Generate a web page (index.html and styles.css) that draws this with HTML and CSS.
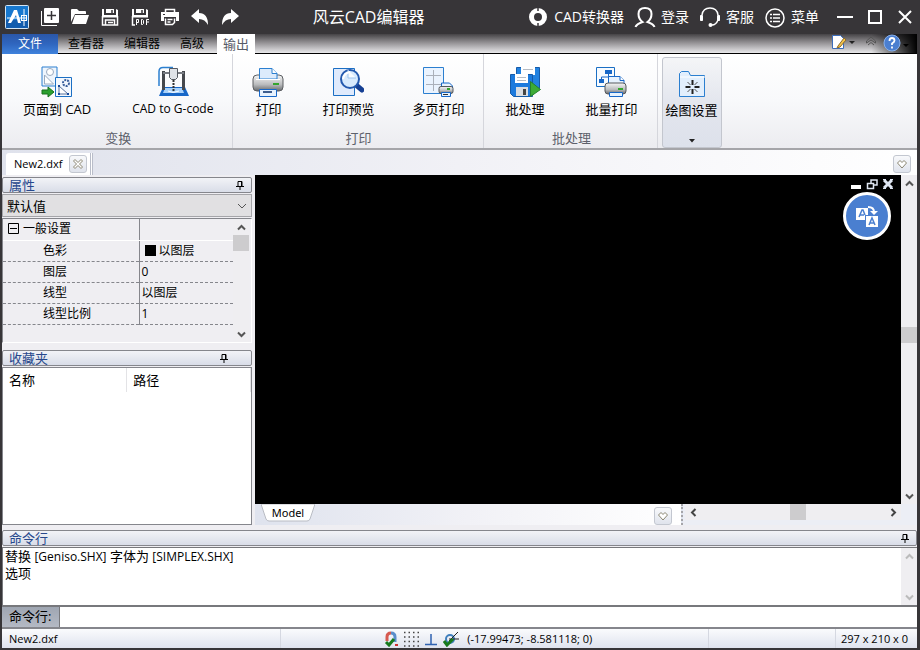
FILE: index.html
```
<!DOCTYPE html>
<html lang="zh-CN">
<head>
    <meta charset="UTF-8">
    <meta name="viewport" content="width=device-width, initial-scale=1.0">
    <title>风云CAD编辑器</title>
    <link rel="stylesheet" href="styles.css">
</head>
<body>
    <header class="titlebar">
        <svg class="logo" viewBox="0 0 24 24">
            <rect x="0.5" y="0.5" width="23" height="23" rx="1" fill="#1778cf" stroke="#d5e6f5"/>
            <path d="M1 15h22v8H1z" fill="#125cae"/>
            <path d="M3 18L9 5h3l4 13h-3l-2-8-5 8z" fill="#fff"/>
            <path d="M2 13h20M19 4v17" stroke="#fff" fill="none"/>
            <rect x="16.500" y="10.500" width="5" height="5" fill="none" stroke="#fff"/>
        </svg>
        <div class="quick-tools">
            <button class="quick" aria-label="新建"><svg viewBox="0 0 20 20"><rect x="4" y="1" width="15" height="15" rx="1" fill="#fff"/><path d="M1.500 4v14.500H17" stroke="#fff" fill="none"/><path d="M11.500 4v9M7 8.500h9" stroke="#373538" stroke-width="1.500"/></svg></button>
            <button class="quick" aria-label="打开"><svg viewBox="0 0 20 20"><path d="M1 15V3q0-1 1-1h5l2 2h6q1 0 1 1v2H5z" fill="#fff"/><path d="M5 8h14l-3 9H2z" fill="#fff"/></svg></button>
            <button class="quick" aria-label="保存"><svg viewBox="0 0 20 20"><path d="M2 2h2v6h12V2l2 1v6H2zM6 2h8v4H6z" fill="#fff"/><path d="M2 9.500h16" stroke="#fff" stroke-width="2"/><path d="M2.500 9v9h15V9M5.500 18v-5h9v5M8 15.500h5" fill="none" stroke="#fff" stroke-width="1.500"/><path d="M12 3v3" stroke="#373538" stroke-width="1.500"/></svg></button>
            <button class="quick" aria-label="保存为 PDF"><svg viewBox="0 0 20 20"><path d="M2 2h2v6h12V2l2 1v6H2zM6 2h8v4H6z" fill="#fff"/><path d="M2 9.500h16" stroke="#fff" stroke-width="2"/><path d="M2.500 9v9H5" fill="none" stroke="#fff" stroke-width="1.500"/><path d="M12 3v3" stroke="#373538" stroke-width="1.500"/><path d="M6.500 18v-5.500h2v3h-2M11.500 12.500h1l1 1v3l-1 1h-1zM16.500 18v-5.500H19M16.500 15H19" fill="none" stroke="#fff"/></svg></button>
            <button class="quick" aria-label="打印"><svg viewBox="0 0 20 20"><path d="M5.500 5.500v-3h9v3" fill="none" stroke="#fff" stroke-width="1.500"/><path d="M1 5h18v9h-3v-4H4v4H1z" fill="#fff"/><path d="M3 7.500h2" stroke="#373538"/><path d="M5.500 11.500v6h7l2-2v-4M7.500 12.500h5M7.500 15h3" fill="none" stroke="#fff" stroke-width="1.500"/></svg></button>
            <button class="quick" aria-label="撤销"><svg viewBox="0 0 20 20"><path d="M1 9l8-7v4q9 0 9 12-3-6-9-6v4z" fill="#fff"/></svg></button>
            <button class="quick" aria-label="重做"><svg viewBox="0 0 20 20"><path d="M19 9l-8-7v4Q2 6 2 18q3-6 9-6v4z" fill="#fff"/></svg></button>
        </div>
        <h1 class="title">风云CAD编辑器</h1>
        <nav class="account">
            <a href="#"><svg viewBox="0 0 22 22"><circle cx="11" cy="11" r="6.500" fill="none" stroke="#fff" stroke-width="5"/><path d="M11 1v4M11 17v4" stroke="#373538" stroke-width="1.500"/></svg>CAD转换器</a>
            <a href="#"><svg viewBox="0 0 22 22"><path d="M1.500 21q1-3 7-5-4-3-4-8 0-6 6.500-6t6.500 6q0 5-4 8 6 2 7 5" fill="none" stroke="#fff" stroke-width="2"/></svg>登录</a>
            <a href="#"><svg viewBox="0 0 22 22"><path d="M3 9q1-7 8-7t8 7M19 14q-2 5-6 5" fill="none" stroke="#fff" stroke-width="1.500"/><path d="M1.500 9.500h2v5h-2zM18.500 9.500h2v5h-2z" stroke="#fff" fill="#fff"/><circle cx="11.500" cy="19" r="2" fill="#fff"/></svg>客服</a>
            <a href="#"><svg viewBox="0 0 22 22"><circle cx="11" cy="12" r="9" fill="none" stroke="#fff" stroke-width="1.500"/><path d="M6 8.500h2M9 8.500h7M6 12h2M9 12h7M6 15.500h2M9 15.500h7" stroke="#fff" stroke-width="1.500"/></svg>菜单</a>
        </nav>
        <div class="window-buttons">
            <button aria-label="最小化"><svg viewBox="0 0 16 16"><path d="M0 8h16" stroke="#fff" stroke-width="2"/></svg></button>
            <button aria-label="最大化"><svg viewBox="0 0 16 16"><rect x="2" y="2" width="12" height="12" fill="none" stroke="#fff" stroke-width="2"/></svg></button>
            <button aria-label="关闭"><svg viewBox="0 0 16 16"><path d="M2 2l12 12M14 2L2 14" stroke="#fff" stroke-width="2"/></svg></button>
        </div>
    </header>

    <div class="window">
        <nav class="ribbon-tabs">
            <button class="tab file">文件</button>
            <button class="tab">查看器</button>
            <button class="tab">编辑器</button>
            <button class="tab">高级</button>
            <button class="tab active">输出</button>
            <div class="tab-tools">
                <button aria-label="样式"><svg class="style-icon" viewBox="0 0 24 16"><path d="M1.500 1.500h8l3 3v10h-11z" fill="#fff" stroke="#3c6dbb"/><path d="M7 12l6-8 2 2-6 7-3 1z" fill="#f4c34a" stroke="#8a6a2a"/><path d="M18 7h6l-3 3z" fill="#222"/></svg></button>
                <button aria-label="折叠"><svg class="small-icon" viewBox="0 0 12 12"><path d="M1.500 6L6 2l4.500 4v2L6 5 1.500 8zM3 10l3-2.500L9 10" fill="none" stroke="#555"/></svg></button>
                <button aria-label="帮助"><svg class="help-icon" viewBox="0 0 28 18"><circle cx="9" cy="9" r="8" fill="#4b7fd0" stroke="#88b0ec"/><path d="M6.500 7q0-3 2.500-3t2.500 2.500q0 1.500-2.500 3V11M9 12.500v2" fill="none" stroke="#fff" stroke-width="1.800"/><path d="M20 10h6l-3 3z" fill="#000"/></svg></button>
            </div>
        </nav>

        <section class="ribbon">
            <div class="group">
                <div class="group-buttons">
                    <button class="tool">
                        <svg viewBox="0 0 32 32"><path d="M1 1h15v19H1z" fill="#eef5fd" stroke="#2b7fd0"/><circle cx="9" cy="6" r="3.500" fill="#fff" stroke="#9aaac0"/><path d="M3.500 9v9h9z" fill="#fff" stroke="#9aaac0"/><path d="M14.500 11.500h16v19h-16z" fill="#f3f8fe" stroke="#1b6fc4"/><circle cx="25" cy="17" r="3" fill="none" stroke="#3a5f9c" stroke-width="2" stroke-dasharray="2 1"/><path d="M18 20v8h9z" fill="#fff" stroke="#56709c"/><path d="M17 19h2v2h-2zM17 27h2v2h-2zM26 27h2v2h-2z" fill="#184a9a"/><path d="M1 24h6v-3l6 5-6 5v-3H1z" fill="#2ba02f" stroke="#17701c"/></svg>
                        页面到 CAD
                    </button>
                    <button class="tool">
                        <svg viewBox="0 0 32 32"><path d="M16 1.500H6q-4 0-4 4V20" fill="none" stroke="#2b7fd0" stroke-width="1.500"/><path d="M6 21h22l4 9H2z" fill="#1767c8"/><path d="M8 22h17l2 5H6z" fill="#a9d2fa"/><path d="M6.500 5v19M26.500 5v19" stroke="#45484d" stroke-width="3"/><path d="M6 7h21" stroke="#777b82" stroke-width="2"/><path d="M12.500 2.500h8v9l-2 2h-4l-2-2z" fill="#dfe3e8" stroke="#555a62"/><path d="M16.500 14v11" stroke="#333" stroke-width="2" stroke-dasharray="2 1"/><path d="M11 25q5 3 11 0" stroke="#fff" fill="none"/></svg>
                        <span class="latin">CAD to G-code</span>
                    </button>
                </div>
                <div class="group-name">变换</div>
            </div>
            <div class="group print">
                <div class="group-buttons">
                    <button class="tool">
                        <svg viewBox="0 0 32 32"><defs><linearGradient id="metal" x1="0" y1="0" x2="0" y2="1"><stop offset="0" stop-color="#f6f6f6"/><stop offset="0.600" stop-color="#b9bbbd"/><stop offset="1" stop-color="#66696c"/></linearGradient></defs><rect x="1" y="9" width="30" height="16" rx="4" fill="url(#metal)" stroke="#5c5f63"/><path d="M7.500 13V2.500H20l5 5V13z" fill="#dcebfc" stroke="#2b7fd0"/><path d="M20 2.500v5h5" fill="#fff" stroke="#2b7fd0"/><path d="M4 13.500h24" stroke="#fff"/><path d="M21 17h6v2h-6z" fill="#35a52e"/><path d="M7.500 23.500h17v7h-17z" fill="#e7f2fe" stroke="#1767c8"/><path d="M11 26h9" stroke="#3d5d8e" stroke-width="2"/></svg>
                        打印
                    </button>
                    <button class="tool">
                        <svg viewBox="0 0 32 32"><path d="M1.500 2.500h21v27h-21z" fill="#dfeafc" stroke="#1b6fc4"/><path d="M24 19l6 5" stroke="#153f93" stroke-width="5" stroke-linecap="round"/><circle cx="18" cy="13" r="9" fill="#d8eafd" stroke="#2459ae" stroke-width="2"/><path d="M16 4v8h8" fill="#f7fbff" stroke="#9dc4ef"/><path d="M11 13q1-6 7-7" fill="none" stroke="#fff" stroke-width="2"/></svg>
                        打印预览
                    </button>
                    <button class="tool">
                        <svg viewBox="0 0 32 32"><path d="M1.500 1.500h20v26h-20z" fill="#eaf3fe" stroke="#2b7fd0"/><path d="M11.500 4v21M4 9.500h15M4 18.500h15" stroke="#aab0ba"/><path d="M19.500 22v-5h8l3 3v3z" fill="#e7f2fe" stroke="#1767c8"/><rect x="17" y="20.500" width="14" height="7" rx="2" fill="url(#metal)" stroke="#55585c"/><path d="M25 23h3" stroke="#35a52e" stroke-width="2"/><path d="M19.500 26.500h9v4h-9z" fill="#e7f2fe" stroke="#1767c8"/><path d="M21 28.500h5" stroke="#333"/></svg>
                        多页打印
                    </button>
                </div>
                <div class="group-name">打印</div>
            </div>
            <div class="group">
                <div class="group-buttons">
                    <button class="tool">
                        <svg viewBox="0 0 32 32"><path d="M7.500 1.500h23v21h-23z" fill="#2282e0" stroke="#155ba9"/><path d="M12 1h14v8H12z" fill="#fff"/><path d="M14 3.500h10" stroke="#b6bcc5"/><path d="M1.500 8.500h22v22h-19l-3-3z" fill="#1c7add" stroke="#155ba9"/><path d="M6 8h13v9H6z" fill="#fff"/><path d="M8 11.500h9M8 14.500h9" stroke="#b6bcc5"/><path d="M7 21h12v9H7z" fill="#d9dde2"/><path d="M14 23h3v6h-3z" fill="#444"/><path d="M21.500 15.500l10 8-10 7z" fill="#3dab36" stroke="#26822b"/></svg>
                        批处理
                    </button>
                    <button class="tool">
                        <svg viewBox="0 0 32 32"><path d="M1.500 1.500h18v19h-18z" fill="#f7fbff" stroke="#1b6fc4"/><path d="M10 4h7v4h-7zM4 13h5v4H4z" fill="#1767c8"/><path d="M13.500 8v3h-7v2" fill="none" stroke="#1767c8"/><path d="M13.500 19v-8.500H25l4 4V19z" fill="#e7f2fe" stroke="#1767c8"/><path d="M25 10.500v4h4" fill="#fff" stroke="#1767c8"/><rect x="10" y="17" width="21" height="11" rx="3" fill="url(#metal)" stroke="#55585c"/><path d="M23 23h5" stroke="#35a52e" stroke-width="2"/><path d="M14.500 26.500h13v4h-13z" fill="#e7f2fe" stroke="#1767c8"/></svg>
                        批量打印
                    </button>
                </div>
                <div class="group-name">批处理</div>
            </div>
            <button class="tool settings">
                <svg viewBox="0 0 32 32"><path d="M3.500 29.500V6.500l2-2h7l2 4h14v21z" fill="#e2effd" stroke="#2b7fd0"/><path d="M4 10h25" stroke="#fff"/><path d="M16.500 13v5M16.500 22v5M9.500 20h5M18.500 20h5" stroke="#222" stroke-width="2"/><path d="M11.500 15l3 3M18.500 22l3 3M21.500 15l-3 3M14.500 22l-3 3" stroke="#555"/></svg>
                绘图设置
                <svg class="drop" viewBox="0 0 6 4"><path d="M0 0h6L3 3.500z" fill="#222"/></svg>
            </button>
        </section>

        <div class="doc-tabs">
            <div class="doc-tab">
                <span>New2.dxf</span>
                <button class="mini" aria-label="关闭文件"><svg viewBox="0 0 12 12"><path d="M1.500 3l1.500-1.500 3 3 3-3L10.500 3l-3 3 3 3L9 10.500l-3-3-3 3L1.500 9l3-3z" fill="#fff" stroke="#8b8672"/></svg></button>
            </div>
            <button class="mini" aria-label="文件列表"><svg viewBox="0 0 12 12"><path d="M1.500 5L4 2.500l2 2 2-2L10.500 5 6 10z" fill="#fff" stroke="#8b8672"/></svg></button>
        </div>

        <main class="workspace">
            <aside class="sidebar">
                <section class="panel">
                    <div class="panel-head"><h2>属性</h2><button class="pin" aria-label="固定"><svg viewBox="0 0 10 12"><path d="M3 7V2.500h4V7M1 7.500h8M5 8v3" fill="none" stroke="#000"/><path d="M6.500 2v5" stroke="#000"/></svg></button></div>
                    <div class="select-box">
                        <select aria-label="对象"><option>默认值</option></select>
                        <svg class="chevron" viewBox="0 0 10 6"><path d="M1 1l4 4 4-4" fill="none" stroke="#555"/></svg>
                    </div>
                    <div class="props">
                        <table>
                            <tr class="section"><th><svg viewBox="0 0 11 11"><path d="M0.500 0.500h10v10h-10zM2 5.500h7" fill="none" stroke="#000"/></svg>一般设置</th><td></td></tr>
                            <tr><th>色彩</th><td><span class="swatch"></span>以图层</td></tr>
                            <tr><th>图层</th><td>0</td></tr>
                            <tr><th>线型</th><td>以图层</td></tr>
                            <tr><th>线型比例</th><td>1</td></tr>
                        </table>
                        <div class="scroll">
                            <button aria-label="向上"><svg viewBox="0 0 9 9"><path d="M1 6.500L4.500 3 8 6.500" fill="none" stroke="#555" stroke-width="2"/></svg></button>
                            <div class="thumb"></div>
                            <div class="track after"></div>
                            <button aria-label="向下"><svg viewBox="0 0 9 9"><path d="M1 2.500L4.500 6 8 2.500" fill="none" stroke="#555" stroke-width="2"/></svg></button>
                        </div>
                    </div>
                </section>
                <section class="panel favorites">
                    <div class="panel-head"><h2>收藏夹</h2><button class="pin" aria-label="固定"><svg viewBox="0 0 10 12"><path d="M3 7V2.500h4V7M1 7.500h8M5 8v3" fill="none" stroke="#000"/><path d="M6.500 2v5" stroke="#000"/></svg></button></div>
                    <div class="fav-list">
                        <table>
                            <tr><th>名称</th><th>路径</th></tr>
                        </table>
                    </div>
                </section>
            </aside>

            <section class="drawing">
                <div class="view">
                    <div class="canvas">
                        <div class="mdi-buttons">
                            <button aria-label="最小化图纸"><svg viewBox="0 0 12 12"><path d="M1 7h10v4H1z" fill="#fff"/></svg></button>
                            <button aria-label="还原图纸"><svg viewBox="0 0 12 12"><path d="M5 5V2h6v5H8M1.500 5.500h6v5h-6z" fill="none" stroke="#dfe6f2" stroke-width="1.500"/></svg></button>
                            <button aria-label="关闭图纸"><svg viewBox="0 0 12 12"><path d="M2 2l8 8M10 2l-8 8" stroke="#dfe6f2" stroke-width="3"/><path d="M1 1.500h3M8 1.500h3M1 10.500h3M8 10.500h3" stroke="#dfe6f2"/></svg></button>
                        </div>
                        <button class="translate" aria-label="翻译"><svg viewBox="0 0 24 24"><path d="M1 4h12v7H10v5H1z" fill="#fff"/><path d="M11 12h12v11H11z" fill="#fff"/><path d="M4 13l3-7h1l2 5M5 11h4M14 21l3-7 3 7M15 19h4" fill="none" stroke="#4a7fd0" stroke-width="1.500"/><path d="M13 3q6 0 6 5" fill="none" stroke="#fff" stroke-width="2"/><path d="M15 7h8l-4 4z" fill="#fff"/></svg></button>
                    </div>
                    <div class="scroll">
                        <button aria-label="向上"><svg viewBox="0 0 9 9"><path d="M1 6.500L4.500 3 8 6.500" fill="none" stroke="#555" stroke-width="2"/></svg></button>
                        <div class="track before"></div>
                        <div class="thumb"></div>
                        <div class="track after"></div>
                        <button aria-label="向下"><svg viewBox="0 0 9 9"><path d="M1 2.500L4.500 6 8 2.500" fill="none" stroke="#555" stroke-width="2"/></svg></button>
                    </div>
                </div>
                <div class="sheets">
                    <div class="sheet-bar">
                        <button class="sheet"><svg viewBox="0 0 54 18" preserveAspectRatio="none"><path d="M0 0h54l-5 15q-1 2-3 2H8q-2 0-3-2z" fill="#fff" stroke="#b9bcc4"/></svg><span>Model</span></button>
                        <button class="mini" aria-label="布局列表"><svg viewBox="0 0 12 12"><path d="M1.500 5L4 2.500l2 2 2-2L10.500 5 6 10z" fill="#fff" stroke="#8b8672"/></svg></button>
                    </div>
                    <div class="scroll horizontal">
                        <button aria-label="向左"><svg viewBox="0 0 9 9"><path d="M6.500 1L3 4.500 6.500 8" fill="none" stroke="#444" stroke-width="2"/></svg></button>
                        <div class="track before"></div>
                        <div class="thumb"></div>
                        <div class="track after"></div>
                        <button aria-label="向右"><svg viewBox="0 0 9 9"><path d="M2.500 1L6 4.500 2.500 8" fill="none" stroke="#444" stroke-width="2"/></svg></button>
                    </div>
                </div>
            </section>
        </main>

        <section class="command">
            <div class="panel-head"><h2>命令行</h2><button class="pin" aria-label="固定"><svg viewBox="0 0 10 12"><path d="M3 7V2.500h4V7M1 7.500h8M5 8v3" fill="none" stroke="#000"/><path d="M6.500 2v5" stroke="#000"/></svg></button></div>
            <div class="log">
                <div class="log-text">
                    <div>替换 <span class="latin">[Geniso.SHX]</span> 字体为 <span class="latin">[SIMPLEX.SHX]</span></div>
                    <div>选项</div>
                </div>
                <div class="scroll disabled">
                    <button aria-label="向上"><svg viewBox="0 0 9 9"><path d="M1 6.500L4.500 3 8 6.500" fill="none" stroke="#bbb" stroke-width="2"/></svg></button>
                    <div class="track after"></div>
                    <button aria-label="向下"><svg viewBox="0 0 9 9"><path d="M1 2.500L4.500 6 8 2.500" fill="none" stroke="#bbb" stroke-width="2"/></svg></button>
                </div>
            </div>
            <div class="prompt">
                <label for="commandInput">命令行:</label>
                <input type="text" id="commandInput">
            </div>
        </section>

        <footer class="status">
            <div class="cell file-name">New2.dxf</div>
            <div class="cell modes">
                <button aria-label="捕捉"><svg viewBox="0 0 16 16"><path d="M4 10V6q0-4 4-4" fill="none" stroke="#d65a50" stroke-width="3"/><path d="M8 2q4 0 4 4v5" fill="none" stroke="#5b8ecb" stroke-width="3"/><path d="M3 11l3 3 5-6" fill="none" stroke="#177a1c" stroke-width="3"/><path d="M12 13h3v2h-3z" fill="#c33"/></svg></button>
                <button aria-label="栅格"><svg viewBox="0 0 16 16"><path d="M1 1.500h15M1 6h15M1 10.500h15M1 15h15" stroke="#444" stroke-width="1.500" stroke-dasharray="1.500 3"/></svg></button>
                <button aria-label="正交"><svg viewBox="0 0 16 16"><path d="M8 3v10M2 13.500h12" fill="none" stroke="#2f62b0" stroke-width="1.500"/></svg></button>
                <button aria-label="追踪"><svg viewBox="0 0 16 16"><circle cx="7" cy="8" r="4" fill="none" stroke="#3f7fbd" stroke-width="2"/><path d="M6 10l9-9M6 8h10" stroke="#222"/><path d="M1 10l3 4 6-6" fill="none" stroke="#177a1c" stroke-width="3"/></svg></button>
                <span>(-17.99473; -8.581118; 0)</span>
            </div>
            <div class="cell blank"></div>
            <div class="cell size">297 x 210 x 0</div>
        </footer>
    </div>
</body>
</html>
```
FILE: styles.css
```
* {
    box-sizing: border-box;
}
body {
    margin: 0;
    height: 100vh;
    display: flex;
    flex-direction: column;
    background: #373538;
    color: #000;
    font-family: "Open Sans", "Noto Sans CJK SC", sans-serif;
    font-size: 13px;
    line-height: 16px;
}
button {
    display: flex;
    align-items: center;
    justify-content: center;
    padding: 0;
    border: none;
    background: none;
    color: inherit;
    font: inherit;
}
svg {
    display: block;
    flex: none;
}
h1, h2 {
    margin: 0;
    font-weight: normal;
}
.latin {
    font-size: 12px;
}

/* title bar */
.titlebar {
    display: flex;
    align-items: center;
    height: 34px;
    padding: 0 7px 0 5px;
    color: #fff;
}
.logo {
    width: 24px;
    height: 24px;
}
.quick-tools {
    display: flex;
    gap: 10px;
    margin-left: 11px;
}
.quick svg {
    width: 20px;
    height: 20px;
}
.title {
    flex: 1;
    padding-right: 30px;
    text-align: center;
    font-size: 16px;
    line-height: 24px;
}
.account {
    display: flex;
    gap: 10px;
    font-size: 14px;
}
.account a {
    display: flex;
    align-items: center;
    gap: 5px;
    color: #fff;
    text-decoration: none;
}
.account svg {
    width: 22px;
    height: 22px;
}
.window-buttons {
    display: flex;
    gap: 14px;
    margin-left: 18px;
}
.window-buttons svg {
    width: 16px;
    height: 16px;
}

.window {
    flex: 1;
    min-height: 0;
    display: flex;
    flex-direction: column;
    margin: 0 3px 2px 2px;
    background: #efeef2;
}

/* ribbon */
.ribbon-tabs {
    display: flex;
    height: 20px;
    border-bottom: 1px solid #000;
    background: linear-gradient(to right, transparent 95%, #000), linear-gradient(#454346, #8a888b 40%, #e9e9eb);
}
.tab {
    padding: 0 10px;
    font-size: 12px;
}
.tab.file {
    width: 56px;
    margin-bottom: -1px;
    background: linear-gradient(#2a57a8, #2f66bf 50%, #3f82dc);
    color: #fff;
}
.tab.active {
    margin: 0 0 -1px 3px;
    padding: 0 6px;
    background: #fff;
    color: #555a66;
    font-size: 13px;
    line-height: 18px;
}
.tab-tools {
    display: flex;
    align-items: flex-start;
    gap: 10px;
    margin-left: auto;
    padding-right: 6px;
}
.style-icon {
    width: 24px;
    height: 16px;
}
.small-icon {
    width: 12px;
    height: 14px;
}
.help-icon {
    width: 28px;
    height: 18px;
}
.tab-tools button:last-child {
    margin-left: -4px;
}
.ribbon {
    display: flex;
    height: 96px;
    border-bottom: 2px solid #a5a5a9;
    background: linear-gradient(#fff, #f8f9fb 50%, #ececf0);
}
.group {
    display: flex;
    flex-direction: column;
    justify-content: space-between;
    padding: 12px 19px 2px 21px;
    border-right: 1px solid #d5d6dc;
}
.group-buttons {
    display: flex;
    gap: 41px;
}
.group.print {
    padding-left: 19px;
}
.print .group-buttons {
    gap: 38px;
}
.group-name {
    text-align: center;
    color: #5d616b;
}
.tool {
    flex-direction: column;
    gap: 3px;
}
.tool svg {
    width: 32px;
    height: 32px;
}
.settings {
    justify-content: flex-start;
    margin: 3px 0 0 4px;
    padding: 9px 3px 0;
    border: 1px solid #c3c6ce;
    border-radius: 3px;
    background: linear-gradient(#f4f5f7, #e3e6ee 50%, #dde1eb);
}
.settings .drop {
    width: 6px;
    height: 4px;
    margin-top: 18px;
}

/* document tabs */
.doc-tabs {
    display: flex;
    justify-content: space-between;
    align-items: center;
    height: 25px;
    padding: 3px 6px 0 4px;
    background: linear-gradient(to right, #dfe2ec, #f1f1f6 50%, #fff);
}
.doc-tab {
    display: flex;
    align-items: center;
    gap: 7px;
    height: 22px;
    padding: 0 3px 0 8px;
    border-right: 3px double #b9bdc9;
    border-radius: 3px 0 0 0;
    background: #fff;
    font-size: 11px;
}
.mini {
    width: 18px;
    height: 18px;
    border: 1px solid #c3c7d0;
    border-radius: 3px;
    background: linear-gradient(#f8f9fb, #dfe3ec);
}
.mini svg {
    width: 12px;
    height: 12px;
}

/* side panels */
.workspace {
    flex: 1;
    min-height: 0;
    display: flex;
    gap: 3px;
}
.sidebar {
    width: 250px;
    display: flex;
    flex-direction: column;
    gap: 7px;
    padding-top: 2px;
}
.panel {
    display: flex;
    flex-direction: column;
    gap: 1px;
}
.panel-head {
    display: flex;
    justify-content: space-between;
    align-items: center;
    height: 16px;
    padding: 0 6px;
    border: 1px solid #85868c;
    border-radius: 2px;
    background: linear-gradient(#f2f3f7, #d9dde8);
}
.panel-head h2 {
    color: #27488c;
    font-size: 13px;
    line-height: 14px;
}
.pin svg {
    width: 10px;
    height: 12px;
}
.select-box {
    display: grid;
    align-items: center;
}
.select-box select {
    grid-area: 1 / 1;
    appearance: none;
    height: 23px;
    padding: 0 4px;
    border: 1px solid #a5a5a9;
    border-radius: 0;
    background: #e1e0e2;
    color: #000;
    font: inherit;
}
.chevron {
    grid-area: 1 / 1;
    justify-self: end;
    width: 10px;
    height: 6px;
    margin-right: 5px;
    pointer-events: none;
}
.props {
    display: flex;
    align-items: flex-start;
    height: 125px;
    padding-right: 2px;
    border: 1px solid #85868c;
    border-right-color: #fff;
    border-bottom-color: #fff;
}
.props table {
    flex: 1;
    border-collapse: collapse;
    table-layout: fixed;
    font-size: 12px;
}
.props th {
    width: 136px;
    height: 21px;
    padding: 0 0 0 40px;
    border-right: 1px solid #85868c;
    border-bottom: 1px dashed #85868c;
    font-weight: normal;
    text-align: left;
}
.props td {
    padding: 0 2px;
    border-bottom: 1px dashed #85868c;
}
.props .section th, .props .section td {
    padding-left: 5px;
    border-bottom: 1px solid #fff;
}
.props th svg {
    display: inline-block;
    width: 11px;
    height: 11px;
    margin-right: 4px;
    vertical-align: -1px;
}
.swatch {
    display: inline-block;
    width: 11px;
    height: 11px;
    margin: 0 3px;
    background: #000;
    vertical-align: -1px;
}
.favorites {
    flex: 1;
}
.favorites .panel-head {
    padding-right: 22px;
}
.fav-list {
    flex: 1;
    border: 1px solid #85868c;
    background: #fff;
}
.fav-list table {
    width: 100%;
    border-collapse: collapse;
}
.fav-list th {
    width: 50%;
    height: 24px;
    padding: 0 6px;
    border-right: 1px solid #e3e3e6;
    font-weight: normal;
    text-align: left;
}

/* scroll bars */
.scroll {
    align-self: stretch;
    width: 16px;
    display: flex;
    flex-direction: column;
    background: #efeef1;
}
.scroll button, .thumb {
    flex: none;
    width: 16px;
    height: 16px;
}
.scroll svg {
    width: 9px;
    height: 9px;
}
.thumb {
    background: #cdccce;
}
.track.before {
    flex: 15;
}
.track.after {
    flex: 16;
}
.scroll.horizontal {
    width: 216px;
    flex-direction: row;
    align-self: flex-start;
}
.horizontal .track.before {
    flex: 18;
}

/* drawing area */
.drawing {
    flex: 1;
    min-width: 0;
    display: flex;
    flex-direction: column;
}
.view {
    flex: 1;
    display: flex;
}
.canvas {
    position: relative;
    flex: 1;
    background: #000;
}
.mdi-buttons {
    display: flex;
    justify-content: flex-end;
    gap: 4px;
    padding: 3px 7px;
}
.mdi-buttons svg {
    width: 12px;
    height: 12px;
}
.translate {
    position: absolute;
    top: 17px;
    right: 10px;
    width: 48px;
    height: 48px;
    border: 3px solid #fff;
    border-radius: 50%;
    background: #4a7fd0;
}
.translate svg {
    width: 24px;
    height: 24px;
}
.sheets {
    display: flex;
    height: 21px;
    padding-right: 16px;
    background: #eceef5;
}
.sheet-bar {
    flex: 1;
    display: flex;
    justify-content: space-between;
    align-items: flex-start;
    margin-right: 2px;
    padding: 0 9px 0 6px;
    border-right: 2px dotted #a5a5a9;
    background: linear-gradient(to right, #dfe3ee, #f1f1f6 50%, #fff);
}
.sheet {
    display: grid;
}
.sheet svg, .sheet span {
    grid-area: 1 / 1;
}
.sheet svg {
    width: 54px;
    height: 18px;
}
.sheet span {
    font-family: "Noto Sans", sans-serif;
    font-size: 11px;
}
.sheet-bar .mini {
    margin-top: 3px;
}

/* command line */
.command {
    display: flex;
    flex-direction: column;
    padding-top: 5px;
}
.log {
    display: flex;
    height: 60px;
    margin-top: 1px;
    border: 1px solid #77787c;
    border-right: none;
    border-bottom-width: 2px;
    background: #fff;
}
.log-text {
    flex: 1;
    padding: 0 2px;
}
.prompt {
    display: flex;
    height: 22px;
    border-bottom: 2px solid #85868c;
}
.prompt label {
    padding: 0 8px 0 7px;
    border-right: 1px solid #77787c;
    background: linear-gradient(#9fa6b2, #b4b9c4);
    line-height: 19px;
}
.prompt input {
    flex: 1;
    min-width: 0;
    padding: 0 4px;
    border: none;
    background: #fff;
    font: inherit;
}

/* status bar */
.status {
    display: flex;
    height: 19px;
    background: linear-gradient(#fafbfd, #dfe3ee);
    font-size: 11px;
}
.cell {
    display: flex;
    align-items: center;
    padding: 0 7px;
    border-right: 1px solid #d5d8e1;
}
.file-name {
    flex: 284;
}
.modes {
    flex: 430;
    justify-content: center;
    gap: 4px;
    padding-right: 20px;
}
.modes svg {
    width: 16px;
    height: 16px;
}
.modes span {
    margin-left: 4px;
}
.blank {
    flex: 121;
}
.size {
    padding: 0 9px 0 5px;
    border-right: none;
}
```
